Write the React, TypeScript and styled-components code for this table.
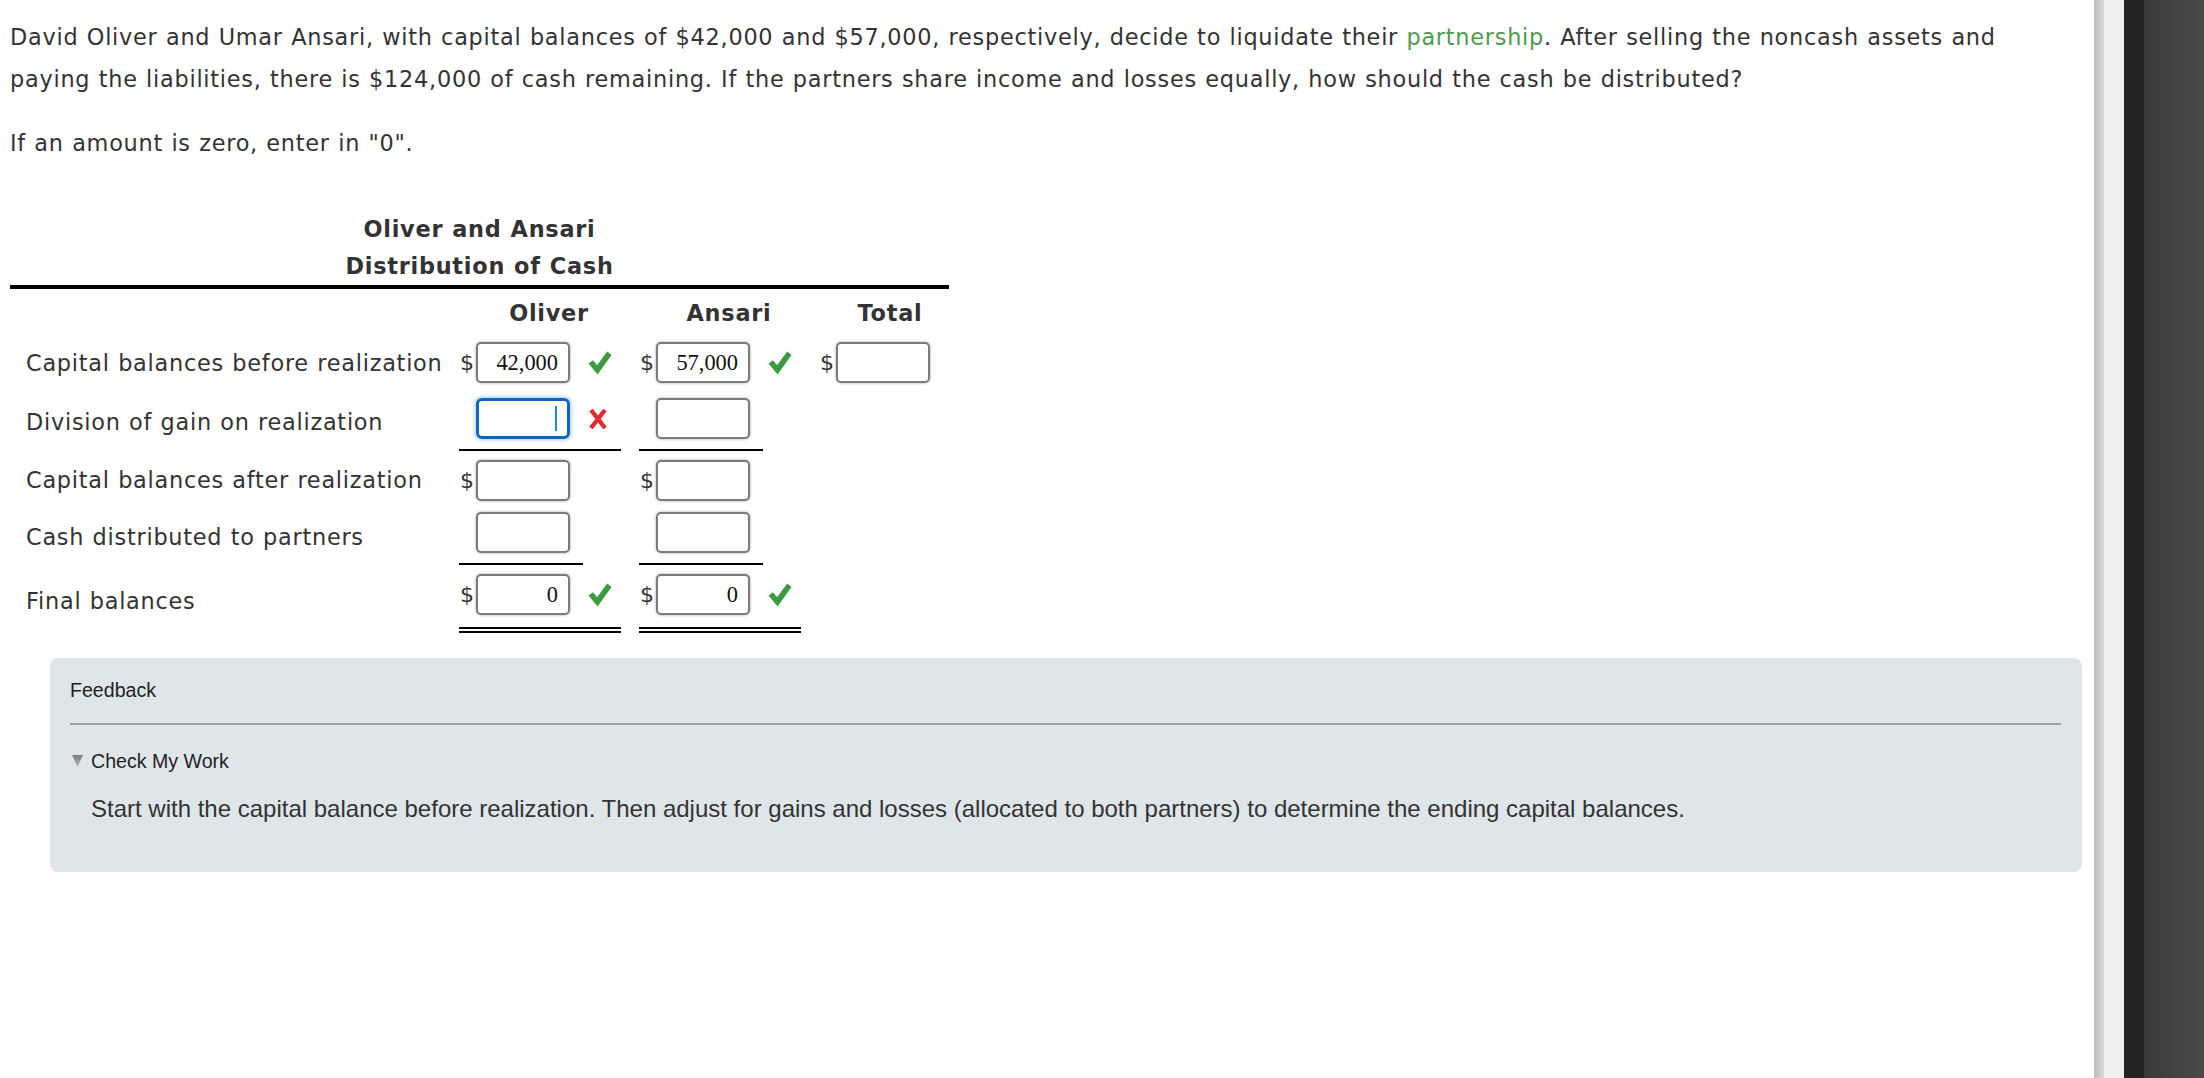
import React from 'react';
import styled, { createGlobalStyle } from 'styled-components';

const GlobalStyle = createGlobalStyle`
  html, body {
    margin: 0;
    padding: 0;
    background: #fff;
  }
  body {
    font-family: Verdana, "DejaVu Sans", sans-serif;
    letter-spacing: 0.75px;
    word-spacing: 0.5px;
    color: #333;
  }
`;

const Page = styled.div`
  display: flex;
  min-height: 100vh;
`;

const Main = styled.main`
  flex: 1;
  min-width: 0;
  padding: 16px 12px 0 10px;
`;

const Rail = styled.div`
  width: 110px;
  display: flex;
  flex-shrink: 0;
`;

const RailStrip = styled.div<{ $w: number; $bg: string }>`
  width: ${(p) => p.$w}px;
  flex: ${(p) => (p.$w ? '0 0 auto' : '1')};
  background: ${(p) => p.$bg};
`;

const Prompt = styled.p`
  margin: 0;
  max-width: 2010px;
  font-size: 22.4px;
  line-height: 42px;
`;

const Note = styled(Prompt)`
  margin-top: 22px;
`;

const Term = styled.span`
  color: #4f9a4f;
`;

const Sheet = styled.section`
  width: 939px;
  margin-top: 47px;
`;

const Title = styled.h3`
  margin: 0;
  text-align: center;
  font-size: 22.4px;
  line-height: 37px;
  font-weight: bold;
  color: #333;
  border-bottom: 4px solid #000;
`;

const Grid = styled.div`
  display: grid;
  grid-template-columns: 449px 180px 180px 130px;
`;

const Head = styled.div<{ $shift?: number }>`
  height: 48px;
  display: flex;
  align-items: center;
  justify-content: center;
  padding-left: ${(p) => p.$shift ?? 0}px;
  font-size: 22.4px;
  font-weight: bold;
`;

const Label = styled.div<{ $lift?: number }>`
  display: flex;
  align-items: center;
  padding: 3px 0 0 16px;
  margin-top: ${(p) => -(p.$lift ?? 0)}px;
  font-size: 22.4px;
  white-space: nowrap;
`;

type Rule = 'none' | 'single' | 'double';

const Cell = styled.div<{ $pt: number }>`
  padding-top: ${(p) => p.$pt}px;
  display: flex;
  align-items: flex-start;
`;

const Figure = styled.div<{ $pb: number; $rule: Rule }>`
  display: inline-flex;
  align-items: center;
  padding-bottom: ${(p) => p.$pb}px;
  border-bottom: ${(p) =>
    p.$rule === 'double'
      ? '6px double #000'
      : p.$rule === 'single'
      ? '2px solid #000'
      : '0 none'};
`;

const Dollar = styled.span`
  width: 17px;
  padding-left: 1px;
  box-sizing: border-box;
  font-size: 22px;
  letter-spacing: 0;
  color: #333;
`;

const FieldWrap = styled.div`
  position: relative;
  margin-right: 13px;
`;

const Field = styled.input<{ $focus?: boolean }>`
  box-sizing: border-box;
  display: block;
  width: 94px;
  height: 41px;
  padding: 0 10px 0 4px;
  border: ${(p) => (p.$focus ? '3px solid #0b66c6' : '2px solid #7b7b7b')};
  border-radius: ${(p) => (p.$focus ? '6px' : '5px')};
  box-shadow: ${(p) =>
    p.$focus ? '0 0 3px 2px rgba(120, 180, 240, 0.45)' : '0 0 3px rgba(0, 0, 0, 0.35)'};
  background: #fff;
  text-align: right;
  font-family: "Liberation Serif", "Times New Roman", serif;
  font-size: 22.4px;
  letter-spacing: 0;
  color: #111;
  outline: none;
`;

const Caret = styled.span`
  position: absolute;
  right: 13px;
  top: 8px;
  width: 2px;
  height: 25px;
  background: #1f8ad6;
`;

const Mark = styled.span`
  width: 38px;
  height: 41px;
  padding-left: 5px;
  box-sizing: border-box;
  display: flex;
  align-items: center;
`;

const Check = () => (
  <svg width="24" height="24" viewBox="0 0 24 24">
    <path d="M0.5 12.6 L5 9.2 L9 14.2 L19.2 0.6 L23.5 4 L9.6 23.6 Z" fill="#3c9a3f" />
  </svg>
);

const Cross = () => (
  <svg width="20" height="22" viewBox="0 0 20 22">
    <path d="M3 2 L17 20 M17 2 L3 20" stroke="#e5282b" strokeWidth="4.4" strokeLinecap="butt" />
  </svg>
);

const Feedback = styled.section`
  margin: 25px 0 0 40px;
  padding: 20px 21px 49px 20px;
  background: #dfe6e9;
  border-radius: 8px;
  font-family: Arial, "Liberation Sans", sans-serif;
  letter-spacing: 0;
  word-spacing: 0;
  color: #222;
`;

const FeedbackHead = styled.div`
  font-size: 19.6px;
  line-height: 24px;
  padding-bottom: 21px;
  border-bottom: 2px solid #9aa0a4;
`;

const Toggle = styled.div`
  display: flex;
  align-items: center;
  gap: 8px;
  margin-top: 24px;
  padding-left: 2px;
  font-size: 19.6px;
  line-height: 24px;
`;

const Arrow = () => (
  <svg width="11" height="12" viewBox="0 0 11 12">
    <defs>
      <linearGradient id="arr" x1="0" y1="0" x2="0" y2="1">
        <stop offset="0" stopColor="#7d7d7d" />
        <stop offset="1" stopColor="#b4b4b4" />
      </linearGradient>
    </defs>
    <path d="M0 0 H11 L5.5 12 Z" fill="url(#arr)" />
  </svg>
);

const Hint = styled.p`
  margin: 22px 0 0 21px;
  font-size: 24px;
  line-height: 28px;
  color: #333;
`;

interface Amount {
  value?: string;
  mark?: 'check' | 'cross';
  dollar?: boolean;
  focus?: boolean;
}

interface RowSpec {
  label: string;
  pt: number;
  pb: number;
  rule: Rule;
  lift?: number;
  cells: (Amount | null)[];
}

const rows: RowSpec[] = [
  {
    label: 'Capital balances before realization',
    pt: 5,
    pb: 6,
    rule: 'none',
    lift: 3,
    cells: [
      { value: '42,000', mark: 'check', dollar: true },
      { value: '57,000', mark: 'check', dollar: true },
      { dollar: true },
    ],
  },
  {
    label: 'Division of gain on realization',
    pt: 9,
    pb: 10,
    rule: 'single',
    cells: [{ mark: 'cross', focus: true }, {}, null],
  },
  {
    label: 'Capital balances after realization',
    pt: 9,
    pb: 5,
    rule: 'none',
    cells: [{ dollar: true }, { dollar: true }, null],
  },
  {
    label: 'Cash distributed to partners',
    pt: 6,
    pb: 10,
    rule: 'single',
    cells: [{}, {}, null],
  },
  {
    label: 'Final balances',
    pt: 9,
    pb: 12,
    rule: 'double',
    cells: [
      { value: '0', mark: 'check', dollar: true },
      { value: '0', mark: 'check', dollar: true },
      null,
    ],
  },
];

const AmountCell = ({ a, row }: { a: Amount | null; row: RowSpec }) => {
  if (!a) return <Cell $pt={row.pt} />;
  return (
    <Cell $pt={row.pt}>
      <Figure $pb={row.pb} $rule={row.rule}>
        <Dollar>{a.dollar ? '$' : ''}</Dollar>
        <FieldWrap>
          <Field $focus={a.focus} defaultValue={a.value ?? ''} readOnly />
          {a.focus && <Caret />}
        </FieldWrap>
        {a.mark && <Mark>{a.mark === 'check' ? <Check /> : <Cross />}</Mark>}
      </Figure>
    </Cell>
  );
};

const App = () => {
  return (
    <Page>
      <GlobalStyle />
      <Main>
        <Prompt>
          David Oliver and Umar Ansari, with capital balances of $42,000 and $57,000, respectively,
          decide to liquidate their <Term>partnership</Term>. After selling the noncash assets and
          paying the liabilities, there is $124,000 of cash remaining. If the partners share income
          and losses equally, how should the cash be distributed?
        </Prompt>
        <Note>If an amount is zero, enter in "0".</Note>

        <Sheet>
          <Title>
            Oliver and Ansari
            <br />
            Distribution of Cash
          </Title>
          <Grid>
            <div />
            <Head>Oliver</Head>
            <Head>Ansari</Head>
            <Head $shift={12}>Total</Head>
            {rows.map((row) => (
              <React.Fragment key={row.label}>
                <Label $lift={row.lift}>{row.label}</Label>
                {row.cells.map((a, i) => (
                  <AmountCell key={i} a={a} row={row} />
                ))}
              </React.Fragment>
            ))}
          </Grid>
        </Sheet>

        <Feedback>
          <FeedbackHead>Feedback</FeedbackHead>
          <Toggle>
            <Arrow />
            Check My Work
          </Toggle>
          <Hint>
            Start with the capital balance before realization. Then adjust for gains and losses
            (allocated to both partners) to determine the ending capital balances.
          </Hint>
        </Feedback>
      </Main>
      <Rail>
        <RailStrip $w={10} $bg="linear-gradient(to right, #bdbdbd, #d9d9d9)" />
        <RailStrip $w={20} $bg="#efefef" />
        <RailStrip $w={20} $bg="#242424" />
        <RailStrip $w={0} $bg="linear-gradient(to right, #3a3a3a, #4b4b4b)" />
      </Rail>
    </Page>
  );
};

export default App;
